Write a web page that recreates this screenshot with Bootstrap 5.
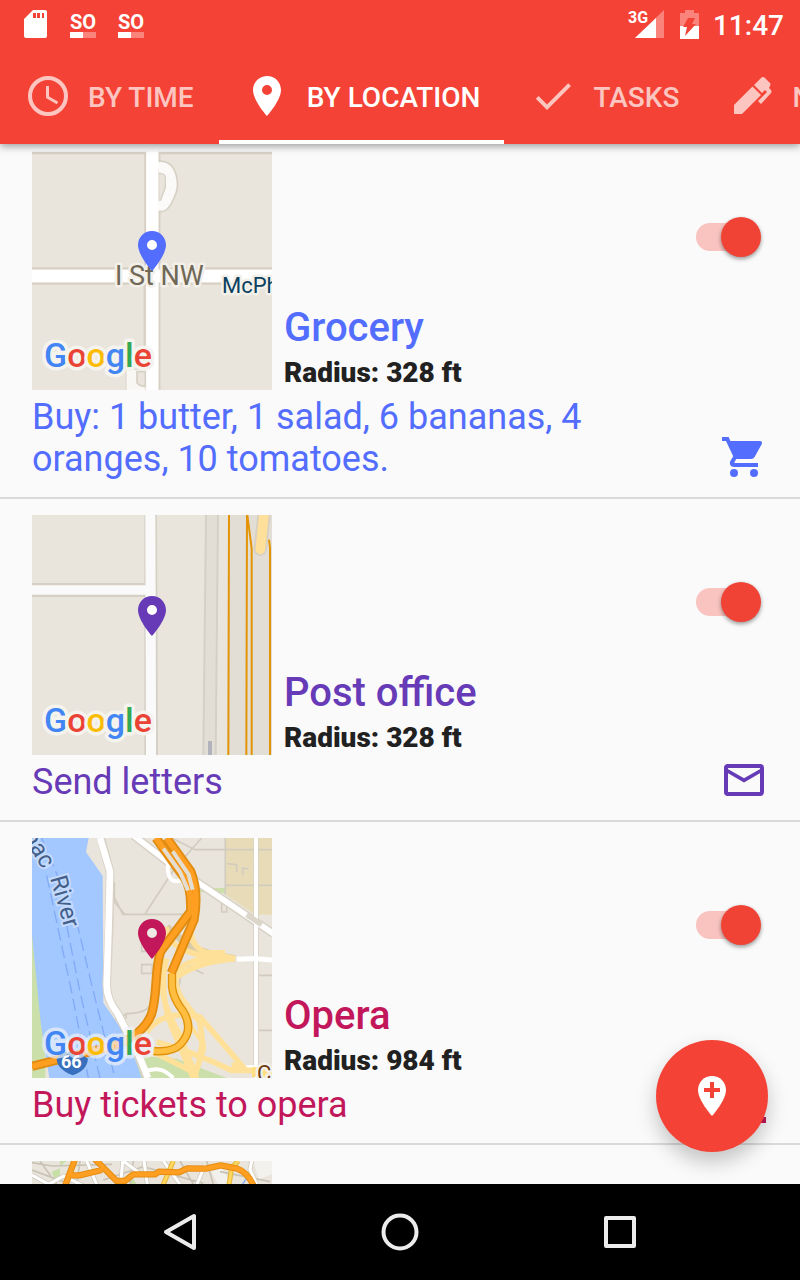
<!DOCTYPE html>
<html lang="en">
<head>
<meta charset="utf-8">
<meta name="viewport" content="width=device-width, initial-scale=1">
<title>Reminders</title>
<link href="https://cdn.jsdelivr.net/npm/bootstrap@5.3.0/dist/css/bootstrap.min.css" rel="stylesheet">
<style>
  body { font-family: Roboto, "Noto Sans", sans-serif; background: #fafafa; }
  svg { display: block; flex: none; }
  .bar-red { background: #f44336; color: #fff; }
  .status { height: 48px; padding: 0 16px 0 24px; font-size: 28px; line-height: 32px; font-weight: 500; }
  .status-icons { gap: 22px; }
  .clock { padding: 4px 0 0 13px; }
  .speed { width: 26px; font-size: 20px; line-height: 20px; font-weight: 700; padding-top: 2px; }
  .speed-bar { height: 6px; background: linear-gradient(90deg, #fff 50%, #fa837b 50%); }
  .app-head { box-shadow: 0 2px 8px rgba(0,0,0,.4); z-index: 2; }
  .tabs-row { height: 96px; gap: 1px; }
  .tab-btn { height: 96px; padding: 0 24px; gap: 16px; border: 0; border-bottom: 4px solid transparent; border-top: 4px solid transparent; background: none; color: #fcc5c0; font-size: 28px; line-height: 32px; font-weight: 500; white-space: nowrap; }
  .tab-btn span { padding-top: 4px; }
  .tab-btn.active { color: #fff; border-bottom-color: #fff; }
  .reminders { padding-bottom: 16px; margin-top: -10px; }
  .reminder { padding: 16px 32px; border-bottom: 2px solid #dadada; color: var(--tone); }
  .map-box { width: 240px; height: 240px; }
  .caption-col { padding-left: 12px; }
  .place { font-size: 40px; line-height: 48px; font-weight: 500; padding-bottom: 4px; }
  .radius { font-size: 28px; line-height: 34px; font-weight: 900; color: #212121; }
  .todo { font-size: 36px; line-height: 42px; padding-top: 6px; margin-bottom: 1px; max-width: 640px; }
  .toggle { appearance: none; width: 60px; height: 28px; margin: 73px 12px 0 0; border-radius: 14px; background: #f9c4c0; cursor: pointer; }
  .toggle::before { content: ""; display: block; width: 40px; height: 40px; margin-left: 0; border-radius: 50%; background: #fafafa; box-shadow: 0 2px 4px rgba(0,0,0,.4); transform: translateY(-6px); }
  .toggle:checked::before { margin-left: 25px; background: #f04336; }
  .fab { right: 32px; bottom: 32px; width: 112px; height: 112px; border: 0; border-radius: 50%; background: #f44336; box-shadow: 0 10px 20px rgba(0,0,0,.22); z-index: 3; }
  .sys-nav { height: 96px; background: #000; gap: 172px; }
  .sys-nav button { border: 0; padding: 0; background: none; }
  .logo-g { font: 500 34px Roboto, sans-serif; paint-order: stroke; stroke: #f5f3ee; stroke-width: 7px; stroke-linejoin: round; }
  .on-water .logo-g { stroke: rgba(240,243,250,.7); }
  .road-name { font-size: 27px; paint-order: stroke; stroke: #f3f0ea; stroke-width: 5px; stroke-linejoin: round; }
  .area-name { font-size: 22px; }
</style>
</head>
<body>
<!-- shared symbols -->
<svg width="0" height="0" class="position-absolute" aria-hidden="true">
  <symbol id="pin" viewBox="0 0 24 24"><path fill-rule="evenodd" d="M12 2C8.100 2 5 5.100 5 9c0 5.250 7 13 7 13s7-7.750 7-13c0-3.900-3.100-7-7-7zm0 9.500a2.500 2.500 0 0 1 0-5 2.500 2.500 0 0 1 0 5z"/></symbol>
</svg>
<div class="d-flex flex-column vh-100 overflow-hidden">
  <header class="app-head bar-red flex-shrink-0 position-relative">
    <div class="status d-flex align-items-center justify-content-between">
      <div class="status-icons d-flex align-items-center">
        <svg width="24" height="28" viewBox="0 0 24 28" fill="#fff"><path fill-rule="evenodd" d="M9 0h12q2 0 2 2v24q0 2-2 2H2q-2 0-2-2V9zM9 3v5h3V3zm4 0v5h3V3zm5 0v5h2V3z"/></svg>
        <div class="speed text-center">SO<div class="speed-bar"></div></div>
        <div class="speed text-center">SO<div class="speed-bar"></div></div>
      </div>
      <div class="d-flex align-items-center">
        <svg class="me-3" width="36" height="30" viewBox="0 0 36 30"><path d="M36 1v28H7z" fill="#fa837b"/><path d="M28 9v20H7z" fill="#fff"/><text x="0" y="14" font-size="16" font-weight="700" fill="#fff">3G</text></svg>
        <svg width="20" height="30" viewBox="0 0 20 30"><path d="M0 4h5V1h9v3h5v13H0z" fill="#fa837b"/><path d="M0 17h19v13H0z" fill="#fff"/><path d="M8 9h7l-3 6h4L5 27l2-9H3z" fill="#f44336"/></svg>
        <span class="clock">11:47</span>
      </div>
    </div>
    <nav class="tabs-row d-flex overflow-hidden" role="tablist">
      <button class="tab-btn d-flex align-items-center flex-shrink-0" role="tab" type="button"><svg width="48" height="48" viewBox="0 0 24 24" fill="none" stroke="currentColor"><circle cx="12" cy="12" r="9" stroke-width="2"/><path d="M11.750 7v5.600l5 2.900" stroke-width="1.500"/></svg><span>BY TIME</span></button>
      <button class="tab-btn active d-flex align-items-center flex-shrink-0" role="tab" aria-selected="true" type="button"><svg width="48" height="48" fill="currentColor"><use href="#pin"/></svg><span>BY LOCATION</span></button>
      <button class="tab-btn d-flex align-items-center flex-shrink-0" role="tab" type="button"><svg width="48" height="48" viewBox="0 0 24 24" fill="currentColor"><path d="M9 16.200 4.800 12l-1.400 1.400L9 19 21 7l-1.400-1.400z"/></svg><span>TASKS</span></button>
      <button class="tab-btn d-flex align-items-center flex-shrink-0" role="tab" type="button"><svg width="48" height="48" viewBox="0 0 48 48" fill="currentColor"><path d="M6 33 24.500 14.500l8.500 8.500L14 42H6z"/><path d="M26 13l7-7q2-2 4 0l5 5q1 1 0 3l-1 2 2 2q1 2 0 3L33 32l-3-3 9-9-2-2-3 3z"/></svg><span>NOTES</span></button>
    </nav>
  </header>

  <main class="flex-fill overflow-hidden position-relative">
    <div class="reminders">
      <!-- Grocery -->
      <article class="reminder" style="--tone:#536dfe">
        <div class="d-flex">
          <svg class="map-box" viewBox="0 0 240 240">
            <svg width="240" height="240" viewBox="36 15 720 720" fill="none">
              <path fill="#e9e5dc" d="M36 21h720v714H36z"/>
              <path stroke="#d7d1c5" stroke-width="7" d="M36 24h340v346H36M756 24H418v346h338M36 416h338v319M756 416H418v319"/>
              <path stroke="#d7d1c5" stroke-width="42" d="M414 68c28-6 40 20 40 55 0 12-20 58-28 58l-12-1"/>
              <path stroke="#fbfaf8" stroke-width="32" d="M414 68c28-6 40 20 40 55 0 12-20 58-28 58l-12-1"/>
              <path fill="#e9e5dc" stroke="#d7d1c5" stroke-width="4" d="M416 85q20 0 20 12v28l-14 40h-6z"/>
              <path fill="#f8f7f4" stroke="#e0dbd0" stroke-width="4" d="M318 740v-67h60v67z"/><path fill="#e9e5dc" stroke="#d7d1c5" stroke-width="5" d="M376 680h-25v34q8 10 25 10z"/>
              <path stroke="#fff" stroke-width="37" d="M397 21v714M36 393h720"/>
            </svg>
            <text class="road-name" x="83" y="135" fill="#6f6857">I St NW</text>
            <text class="road-name area-name" x="190" y="143" fill="#0a4060" style="font-size:22px">McPherson</text>
            <circle cx="120" cy="95" r="6" fill="#fff"/><svg x="96" y="77" width="48" height="48" fill="#536dfe"><use href="#pin"/></svg>
            <text class="logo-g" x="12" y="217"><tspan fill="#4285f4">G</tspan><tspan fill="#ea4335">o</tspan><tspan fill="#fbbc05">o</tspan><tspan fill="#4285f4">g</tspan><tspan fill="#34a853">l</tspan><tspan fill="#ea4335">e</tspan></text>
          </svg>
          <div class="caption-col flex-fill align-self-end"><div class="place">Grocery</div><div class="radius">Radius: 328 ft</div></div>
          <input class="toggle" type="checkbox" role="switch" aria-label="Grocery" checked>
        </div>
        <div class="d-flex justify-content-between align-items-end"><div class="todo">Buy: 1 butter, 1 salad, 6 bananas, 4 oranges, 10 tomatoes.</div>
          <svg width="48" height="48" viewBox="0 0 24 24" fill="currentColor"><path d="M7 18a2 2 0 1 0 0 4 2 2 0 0 0 0-4zM1 2v2h2l3.600 7.600L5.200 14c-.8 1.500.3 3 1.800 3h12v-2H7.400c-.2 0-.3-.2-.2-.4l.9-1.600h7.400c.8 0 1.400-.4 1.800-1l3.600-6.500c.4-.7-.1-1.500-.9-1.500H5.200L4.300 2H1zm16 16a2 2 0 1 0 0 4 2 2 0 0 0 0-4z"/></svg></div>
      </article>

      <!-- Post office -->
      <article class="reminder" style="--tone:#673ab7">
        <div class="d-flex">
          <svg class="map-box" viewBox="0 0 240 240">
            <svg width="240" height="240" viewBox="36 21 720 720" fill="none">
              <path fill="#e9e5dc" d="M36 21h720v720H36z"/>
              <path fill="#e2ded6" d="M556 21h38l-8 720h-36zM626 21h130v720H622z"/>
              <path stroke="#d5d0c6" stroke-width="6" d="M558 21l-8 720M594 21l-7 720M36 228h340V21M36 264h340v477M408 21l3 720"/>
              <path stroke="#fbfafa" stroke-width="30" d="M391 21l2 720"/><path stroke="#fbfafa" stroke-width="27" d="M36 246h360"/>
              <path stroke="#e39406" stroke-width="6" d="M627 21l-2 720M681 21l-2 720M682 21l13 100v620M747 95l3 25v621"/>
              <path stroke="#d8d0c0" stroke-width="40" stroke-linecap="round" d="M733 10l-12 114"/>
              <path stroke="#ffe09a" stroke-width="29" stroke-linecap="round" d="M733 10l-12 114"/>
              <path fill="#b2b2bc" d="M564 699h12v42h-12z"/>
            </svg>
            <circle cx="120" cy="95" r="6" fill="#fff"/><svg x="96" y="77" width="48" height="48" fill="#673ab7"><use href="#pin"/></svg>
            <text class="logo-g" x="12" y="217"><tspan fill="#4285f4">G</tspan><tspan fill="#ea4335">o</tspan><tspan fill="#fbbc05">o</tspan><tspan fill="#4285f4">g</tspan><tspan fill="#34a853">l</tspan><tspan fill="#ea4335">e</tspan></text>
          </svg>
          <div class="caption-col flex-fill align-self-end"><div class="place">Post office</div><div class="radius">Radius: 328 ft</div></div>
          <input class="toggle" type="checkbox" role="switch" aria-label="Post office" checked>
        </div>
        <div class="d-flex justify-content-between align-items-end"><div class="todo">Send letters</div>
          <svg width="48" height="48" viewBox="0 0 24 24" fill="none" stroke="currentColor" stroke-width="2"><rect x="3" y="5" width="18" height="14" rx="1"/><path d="M3 7l9 5.200L21 7" stroke-width="1.800"/></svg></div>
      </article>

      <!-- Opera -->
      <article class="reminder" style="--tone:#c2185b">
        <div class="d-flex">
          <svg class="map-box on-water" viewBox="0 0 240 240">
            <svg width="240" height="240" viewBox="36 18 720 720" fill="none">
              <path fill="#e9e5dc" d="M36 18h720v720H36z"/>
              <path fill="#e8dcb8" d="M616 18h140v230h-50l-90-60z"/>
              <path fill="#cadfaa" d="M36 280h40v458H36zM520 168h95v15l-90-3zM340 670l130 10 150 58H360z"/>
              <path fill="#a3c7ff" d="M36 18h170l-8 42 50 72 2 380 75 110 40 116H88L62 570 36 310z"/>
              <path stroke="#83abf5" stroke-width="4" stroke-dasharray="38 16" d="M65 18l105 250 45 190 70 280M80 130l75 350 50 258M140 280l40 200 60 258"/>
              <path stroke="#d2ccc0" stroke-width="5" d="M455 18l70 35h231M545 18l-80 90-90 138M616 18v170M616 160h140M283 150v60l32 37h200M280 190l30 60M622 95l28 3v22M668 130v-22l18 3M605 190v50h15v-30M716 430h40M716 595h40M365 398h32v26h-32zM365 330h30v28h-30zM318 560v-15c60 0 72-20 80-40M320 545l-35 20M485 420c-20 90-10 130 50 140M500 400l50 25"/>
              <g stroke="#d8d2c6" stroke-width="26"><path d="M242 18l28 100-2 160-8 180q0 45 32 85l58 115 32 80"/><path d="M340 10l110 85 310 210"/><path stroke-width="17" d="M708 18v720"/></g>
              <path stroke="#fff" stroke-width="20" d="M240 18l30 100-4 160-6 180q0 45 32 85l60 115 32 80"/>
              <path stroke="#fff" stroke-width="17" d="M340 10l110 85 310 210"/>
              <path stroke="#fff" stroke-width="12" d="M708 18v720M444 90c-5 60 20 65 45 52M370 720c50-20 70 0 90 18M665 706h43"/>
              <path stroke="#dcd6ca" stroke-width="16" d="M680 248l45 30"/>
              <g stroke="#d9cba8" stroke-width="21"><path d="M440 285l70 60 60 20 75 15"/></g>
              <g stroke="#ffe098" stroke-width="17">
                <path d="M512 300q8 60 65 65l68 15q-110-10-160 25-35 30 0 95l55 70 10 80-28 88"/>
                <path d="M440 285q-10 60 120 90M645 380q-120 10-180 60M440 380c-30 100 0 160 40 230l50 128M432 410q-10 100 30 190l58 138M380 600q50-70 160-45l125 145h-30M400 660l120 60M410 630q110 30 225 85h90"/>
                <path stroke-width="38" d="M545 373h70"/>
                <path stroke-width="12" d="M465 430c5 120 50 150 80 200l-20 108"/>
              </g>
              <path stroke="#fff" stroke-width="15" d="M650 382q50-5 106 2"/>
              <path stroke="#df920a" stroke-width="25" d="M456 425v40q4 35 33 72 35 55-8 100-25 25-80 20"/>
              <path stroke="#ffbe3f" stroke-width="17" d="M456 422v43q4 35 33 72 35 55-8 100-25 25-80 20"/>
              <g stroke="#e08c10" stroke-width="28"><path d="M408 18l82 115q25 30 22 105l-90 120c-20 60-8 130-28 190q-30 70-130 98L36 703"/><path d="M440 18l72 100q25 60 10 145l-68 160"/></g>
              <g stroke="#ff9f22" stroke-width="17"><path d="M408 18l82 115q25 30 22 105l-90 120c-20 60-8 130-28 190q-30 70-130 98L36 703"/><path d="M440 18l72 100q25 60 10 145l-68 160"/></g>
              <path stroke="#e4ded2" stroke-width="12" d="M430 50l50 70 24 55M458 58l48 70 12 45"/>
              <path fill="#3970bd" d="M110 680q10-8 12-20h65q2 15 17 20-3 35-46 50-48-20-48-50z"/>
              <path fill="#ffe080" d="M696 705h60v30h-60z"/>
            </svg>
            <g font-size="24" fill="#435f8a" stroke="#c4dafc" stroke-width="4" paint-order="stroke"><text transform="translate(-14 -8) rotate(58)">mac</text><text transform="translate(18 40) rotate(74)">River</text></g>
            <text x="29" y="230" font-size="18" font-weight="700" fill="#fff">66</text>
            <text class="road-name area-name" x="225" y="243" fill="#6b3c10" style="font-size:22px">C</text>
            <circle cx="120" cy="95" r="6" fill="#eee9e4"/><svg x="96" y="77" width="48" height="48" fill="#c2185b"><use href="#pin"/></svg>
            <text class="logo-g" x="12" y="217"><tspan fill="#4285f4">G</tspan><tspan fill="#ea4335">o</tspan><tspan fill="#fbbc05">o</tspan><tspan fill="#4285f4">g</tspan><tspan fill="#34a853">l</tspan><tspan fill="#ea4335">e</tspan></text>
          </svg>
          <div class="caption-col flex-fill align-self-end"><div class="place">Opera</div><div class="radius">Radius: 984 ft</div></div>
          <input class="toggle" type="checkbox" role="switch" aria-label="Opera" checked>
        </div>
        <div class="d-flex justify-content-between align-items-end"><div class="todo">Buy tickets to opera</div>
          <svg width="48" height="48" viewBox="0 0 24 24" fill="currentColor"><path d="M1 19h22v3H1z"/></svg></div>
      </article>

      <!-- Next reminder, cut off by the fold -->
      <article class="reminder">
        <svg class="map-box" viewBox="36 63 720 720" fill="none">
          <path fill="#e9e5dc" d="M36 63h720v720H36z"/>
          <path fill="#f3f1ed" d="M575 95l30-10 25 40-30 20zM700 63h56v40l-40 15z"/>
          <path fill="#c8dfa8" d="M95 95l25-10v25l-15 12zM120 63h20l-20 15zM335 110l15 22h-20z"/>
          <path stroke="#c9c3b5" stroke-width="5" d="M36 68l60 10 180-5M60 63l50 70M180 63l-10 70M340 63l-10 70M480 63l40 70M560 63l20 70M36 90l120 45M600 95l150 30M250 120l120-40 180 50"/>
          <g stroke="#d2ccc0" stroke-width="14"><path d="M36 105l50 28 45-25 60 30M200 63l32 75M308 63l-6 70M310 63l60 45M372 63l10 70M430 63l50 70M555 75l-25 60M695 63l-5 25 20 45"/></g>
          <g stroke="#fff" stroke-width="9"><path d="M36 105l50 28 45-25 60 30M200 63l32 75M308 63l-6 70M310 63l60 45M372 63l10 70M430 63l50 70M555 75l-25 60M695 63l-5 25 20 45"/></g>
          <path stroke="#e3b53a" stroke-width="15" d="M460 63l-32 75M655 63l-20 20-8 52"/><path stroke="#ffd75e" stroke-width="9" d="M460 63l-32 75M655 63l-20 20-8 52"/>
          <path stroke="#83abf5" stroke-width="4" d="M668 132l14-20"/>
          <g stroke="#e58c12" stroke-width="19" stroke-linejoin="round"><path d="M165 58l-30 80M148 106h30l68-16M225 58l65 65h25l25-20h65l12-8 60 2 25-12 55 1 45-10 50 10q30 10 48 50"/></g>
          <g stroke="#ff9f22" stroke-width="13" stroke-linejoin="round"><path d="M165 58l-30 80M148 106h30l68-16M225 58l65 65h25l25-20h65l12-8 60 2 25-12 55 1 45-10 50 10q30 10 48 50"/></g>
        </svg>
      </article>
    </div>
    <button class="fab position-absolute d-flex align-items-center justify-content-center" type="button" aria-label="Add place reminder">
      <svg width="48" height="48" viewBox="0 0 24 24"><path fill="#fff" d="M12 2C8.100 2 5 5.100 5 9c0 5.250 7 13 7 13s7-7.750 7-13c0-3.900-3.100-7-7-7z"/><path fill="#f44336" d="M11 5h2v3h3v2h-3v3h-2v-3H8V8h3z"/></svg>
    </button>
  </main>

  <footer class="sys-nav d-flex align-items-center justify-content-center flex-shrink-0">
    <button type="button" aria-label="Back"><svg width="48" height="48" viewBox="0 0 48 48" fill="none" stroke="#ececec" stroke-width="4" stroke-linejoin="round"><path d="M38 8v32L10 24z"/></svg></button>
    <button type="button" aria-label="Home"><svg width="48" height="48" viewBox="0 0 48 48" fill="none" stroke="#ececec" stroke-width="4"><circle cx="24" cy="24" r="16.500"/></svg></button>
    <button type="button" aria-label="Recent apps"><svg width="48" height="48" viewBox="0 0 48 48" fill="none" stroke="#ececec" stroke-width="4" stroke-linejoin="round"><path d="M10 10h28v28H10z"/></svg></button>
  </footer>
</div>
<script src="https://cdn.jsdelivr.net/npm/bootstrap@5.3.0/dist/js/bootstrap.bundle.min.js"></script>
</body>
</html>
